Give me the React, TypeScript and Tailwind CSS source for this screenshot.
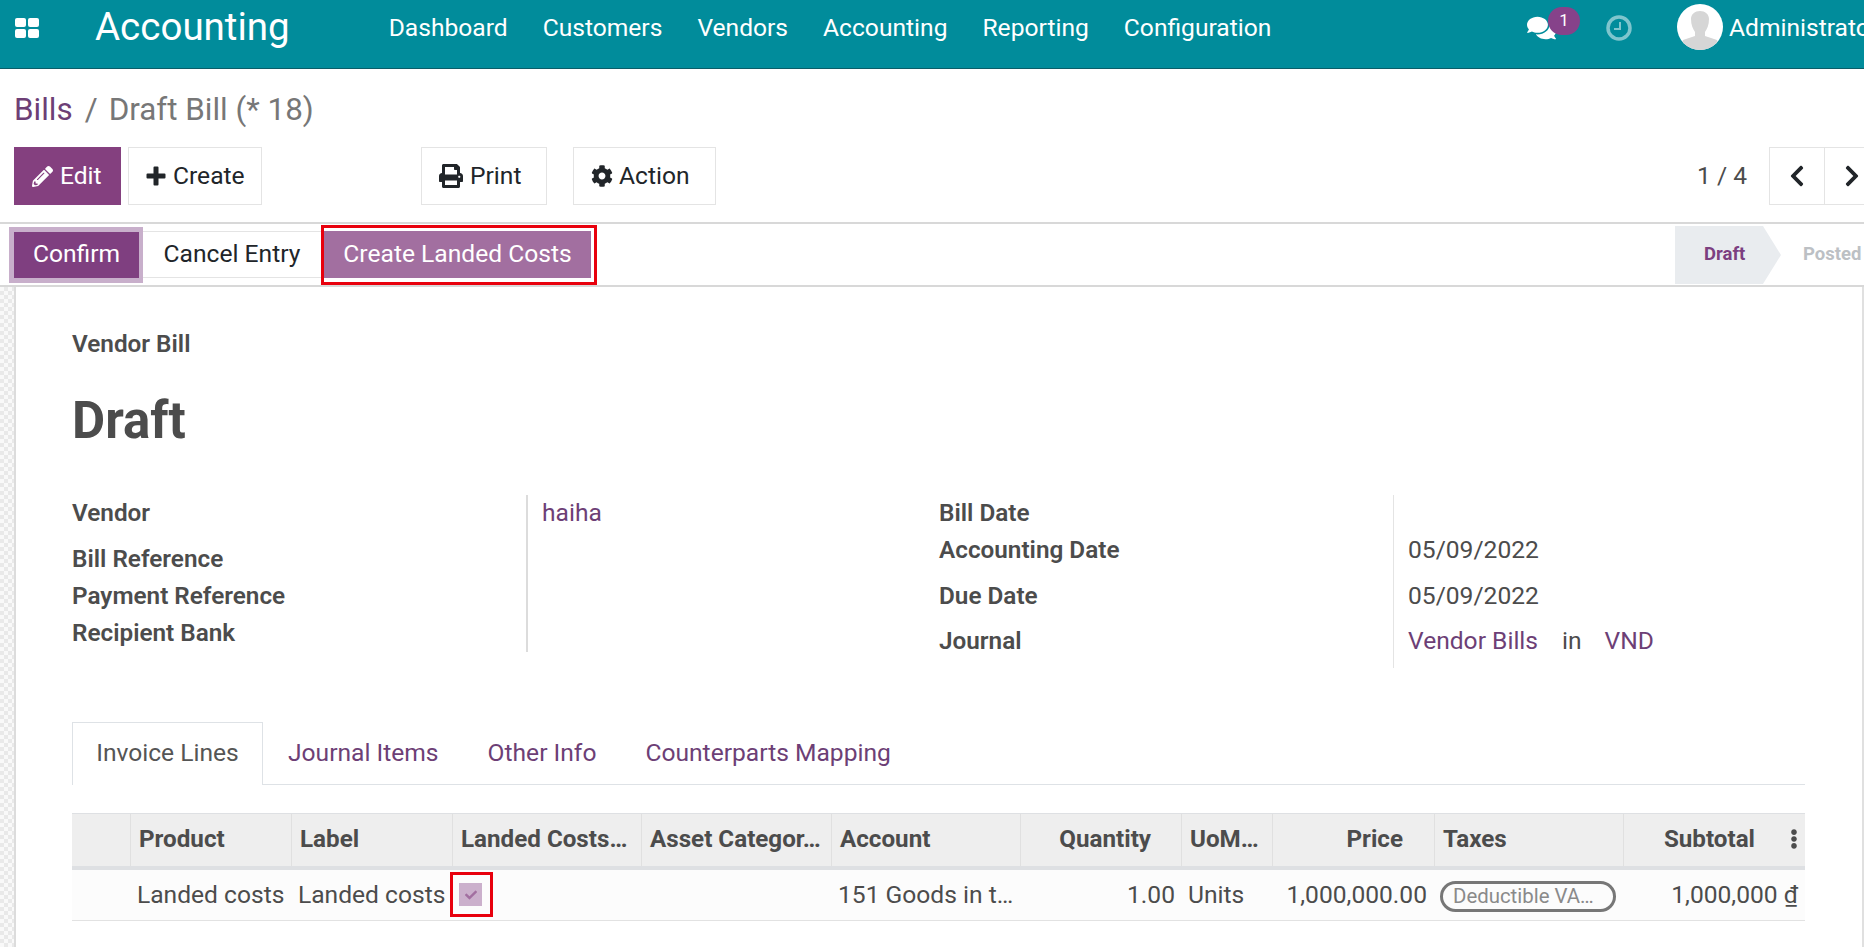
import { FaChevronLeft, FaChevronRight, FaCog, FaComments, FaEllipsisV, FaCheck, FaPencilAlt, FaPrint } from "react-icons/fa";

const navLinks = ["Dashboard", "Customers", "Vendors", "Accounting", "Reporting", "Configuration"];
const tabs = ["Journal Items", "Other Info", "Counterparts Mapping"];
const gridCols = "grid-cols-[59px_161px_161px_189px_190px_189px_161px_91px_162px_189px_181px]";
const headCell = "flex items-center border-r border-[#e0e0e0] pb-[2px] pl-[8px] text-[24.2px] font-bold text-[#4c4c4c] whitespace-nowrap";

const Grid = () => (
  <svg viewBox="0 0 24 20" className="h-[20px] w-[24px] fill-white">
    <rect x="0" y="0" width="11" height="9" rx="2" />
    <rect x="13" y="0" width="11" height="9" rx="2" />
    <rect x="0" y="11" width="11" height="9" rx="2" />
    <rect x="13" y="11" width="11" height="9" rx="2" />
  </svg>
);

const Clock = () => (
  <svg viewBox="0 0 26 26" className="h-[26px] w-[26px] fill-none stroke-[#7fc5cd]">
    <circle cx="13" cy="13" r="11" strokeWidth="3.500" />
    <path d="M14 7v7H8" strokeWidth="2" />
  </svg>
);

const Avatar = () => (
  <div className="h-[46px] w-[46px] shrink-0 overflow-hidden rounded-full bg-white">
    <svg viewBox="0 0 46 46" className="h-[46px] w-[46px] fill-[#d6d6d6]">
      <path d="M14 15c0-5 4-8 9-8s9 3 9 8c0 6-2 10-4 13v4l12 4 3 10H3l3-10 12-4v-4c-2-3-4-7-4-13z" />
    </svg>
  </div>
);

const Plus = () => (
  <svg viewBox="0 0 20 20" className="h-[20px] w-[20px] fill-[#212529]">
    <path d="M7.500 1.500a1 1 0 0 1 1-1h3a1 1 0 0 1 1 1v6h6a1 1 0 0 1 1 1v3a1 1 0 0 1-1 1h-6v6a1 1 0 0 1-1 1h-3a1 1 0 0 1-1-1v-6h-6a1 1 0 0 1-1-1v-3a1 1 0 0 1 1-1h6z" />
  </svg>
);

const App = () => {
  return (
    <div className="h-[947px] w-[1864px] overflow-hidden bg-white font-['Roboto',sans-serif] text-[24.6px] text-[#4c4c4c]">
      {/* Navbar */}
      <header className="flex h-[69px] items-center border-b border-[#0b5d68] bg-[#018c9b] pb-[12px] text-white">
        <div className="ml-[15px] mb-[1px]"><Grid /></div>
        <span className="ml-[56px] mb-[1px] text-[38.5px] leading-none">Accounting</span>
        <nav className="ml-[99px] flex gap-[35px]">
          {navLinks.map((link) => (
            <span key={link} className="leading-none">{link}</span>
          ))}
        </nav>
        <div className="ml-auto flex items-center">
          <div className="relative mr-[50px]">
            <FaComments className="h-[28px] w-[29px]" />
            <span className="absolute left-[21px] -top-[7px] flex h-[28px] w-[32px] items-center justify-center rounded-full bg-[#86428a] text-[17px]">1</span>
          </div>
          <div className="mr-[45px]"><Clock /></div>
          <div className="mb-[2px]"><Avatar /></div>
          <span className="ml-[6px] w-[135px] overflow-hidden whitespace-nowrap">Administrator</span>
        </div>
      </header>

      {/* Breadcrumb */}
      <div className="flex h-[78px] items-center pl-[14px] pt-[3px] text-[31.4px] text-[#777]">
        <span className="text-[#6d3f76]">Bills</span>
        <span className="ml-[12px] mr-[11px]">/</span>
        <span>Draft Bill (* 18)</span>
      </div>

      {/* Buttons */}
      <div className="flex h-[77px] items-start border-b-2 border-[#d8d8d8] pl-[14px]">
        <button className="flex h-[58px] w-[107px] items-center gap-[7px] bg-[#84407f] pl-[18px] text-white">
          <FaPencilAlt className="h-[21px] w-[21px]" />Edit
        </button>
        <button className="ml-[7px] flex h-[58px] w-[134px] items-center gap-[7px] border border-[#e4e4e4] pl-[17px] text-[#212529]">
          <Plus />Create
        </button>
        <button className="ml-[159px] flex h-[58px] w-[126px] items-center gap-[7px] border border-[#e4e4e4] pl-[17px] text-[#212529]">
          <FaPrint className="h-[24px] w-[24px]" />Print
        </button>
        <button className="ml-[26px] flex h-[58px] w-[143px] items-center gap-[6px] border border-[#e4e4e4] pl-[17px] text-[#212529]">
          <FaCog className="h-[22px] w-[22px]" />Action
        </button>
        <div className="ml-auto flex">
          <span className="mr-[22px] flex h-[58px] items-center">1 / 4</span>
          <button className="flex h-[58px] w-[56px] items-center justify-center border border-[#e4e4e4] text-[#212529]">
            <FaChevronLeft className="h-[24px] w-[24px]" />
          </button>
          <button className="flex h-[58px] w-[39px] items-center justify-start border-y border-[#e4e4e4] pl-[15px] text-[#212529]">
            <FaChevronRight className="h-[24px] w-[24px] shrink-0" />
          </button>
        </div>
      </div>

      {/* Statusbar */}
      <div className="flex h-[63px] items-center border-b-2 border-[#d8d8d8]">
        <button className="ml-[9px] h-[56px] w-[134px] border-[5px] border-r-[4px] border-[#c8afcb] bg-[#7f3f80] text-white">Confirm</button>
        <button className="h-[47px] w-[178px] border-y border-[#e4e4e4] text-[#212529]">Cancel Entry</button>
        <div className="flex h-[60px] w-[276px] items-center border-[3px] border-[#e8000d]">
          <button className="h-[47px] w-[267px] bg-[#a26fa0] text-white">Create Landed Costs</button>
        </div>
        <div className="ml-auto mt-[2px] flex h-[58px] items-center self-start">
          <div className="flex h-[58px] w-[106px] items-center bg-[#e9ecef] pb-[1px] pl-[29px] text-[18.5px] font-bold text-[#7c3f80] [clip-path:polygon(0_0,83%_0,100%_50%,83%_100%,0_100%)]">Draft</div>
          <span className="ml-[22px] w-[61px] overflow-hidden pb-[1px] text-[18.5px] font-bold whitespace-nowrap text-[#bcc0c4]">Posted</span>
        </div>
      </div>

      {/* Sheet */}
      <div className="flex h-[660px]">
        <div className="w-[16px] shrink-0 border-r-2 border-[#dcdcdc] bg-[repeating-conic-gradient(#e9e9e9_0_25%,#f9f9f9_0_50%)] bg-[length:8px_8px]" />
        <main className="flex-1 border-r-2 border-[#e0e0e0] pl-[56px] pr-[57px]">
          <div className="mt-[43px] text-[24.3px] font-semibold leading-[28px]">Vendor Bill</div>
          <h1 className="mt-[31px] text-[51px] font-bold leading-[64px]">Draft</h1>

          {/* Fields */}
          <div className="mt-[42px] flex text-[24.3px] font-semibold">
            <div className="h-[157px] w-[456px] border-r-2 border-[#dcdcdc] pt-[4px]">
              <div className="leading-[28px]">Vendor</div>
              <div className="mt-[18px] leading-[28px]">Bill Reference</div>
              <div className="mt-[9px] leading-[28px]">Payment Reference</div>
              <div className="mt-[9px] leading-[28px]">Recipient Bank</div>
            </div>
            <div className="w-[397px] pl-[14px] pt-[4px] text-[24.6px] font-normal leading-[28px] text-[#6d3f76]">haiha</div>
            <div className="h-[173px] w-[14px]" />
            <div className="h-[173px] w-[455px] border-r border-[#e4e4e4] pt-[4px]">
              <div className="leading-[28px]">Bill Date</div>
              <div className="mt-[9px] leading-[28px]">Accounting Date</div>
              <div className="mt-[18px] leading-[28px]">Due Date</div>
              <div className="mt-[17px] leading-[28px]">Journal</div>
            </div>
            <div className="pl-[14px] pt-[4px] text-[24.6px] font-normal">
              <div className="h-[28px]" />
              <div className="mt-[9px] leading-[28px]">05/09/2022</div>
              <div className="mt-[18px] leading-[28px]">05/09/2022</div>
              <div className="mt-[17px] flex leading-[28px]">
                <span className="text-[#6d3f76]">Vendor Bills</span>
                <span className="ml-[24px]">in</span>
                <span className="ml-[23px] text-[#6d3f76]">VND</span>
              </div>
            </div>
          </div>

          {/* Tabs */}
          <div className="mt-[54px] flex h-[63px] border-b border-[#dee2e6]">
            <div className="flex h-[63px] w-[191px] items-center justify-center border-x border-t border-[#dee2e6] bg-white pb-[1px] text-[#555]">Invoice Lines</div>
            <div className="ml-[25px] flex items-center gap-[49px]">
              {tabs.map((tab) => (
                <span key={tab} className="text-[#6d3f76]">{tab}</span>
              ))}
            </div>
          </div>

          {/* Lines table */}
          <div className={`mt-[28px] grid ${gridCols} h-[57px] border-t border-b-4 border-[#dee0e3] bg-[#eeeeee]`}>
            <div className={headCell} />
            <div className={headCell}>Product</div>
            <div className={headCell}>Label</div>
            <div className={headCell}>Landed Costs…</div>
            <div className={headCell}>Asset Categor…</div>
            <div className={headCell}>Account</div>
            <div className={`${headCell} justify-end pr-[30px]`}>Quantity</div>
            <div className={headCell}>UoM…</div>
            <div className={`${headCell} justify-end pr-[31px]`}>Price</div>
            <div className={headCell}>Taxes</div>
            <div className="relative flex items-center justify-end pb-[2px] pr-[50px] text-[24.2px] font-bold text-[#4c4c4c]">
              Subtotal
              <FaEllipsisV className="absolute right-[1px] h-[20px] w-[20px]" />
            </div>
          </div>
          <div className={`grid ${gridCols} h-[51px] items-center border-b border-[#e2e2e2] bg-[#fcfcfc]`}>
            <div />
            <div className="pl-[6px]">Landed costs</div>
            <div className="pl-[6px]">Landed costs</div>
            <div className="relative h-full">
              <div className="absolute left-[-3px] top-[2px] flex h-[45px] w-[43px] items-center justify-center border-[3px] border-[#e8000d]">
                <div className="mr-[2px] flex h-[23px] w-[23px] items-center justify-center bg-[#cbb0cc]">
                  <FaCheck className="h-[12px] w-[12px] text-[#a26fa0]" />
                </div>
              </div>
            </div>
            <div />
            <div className="pl-[6px]">151 Goods in t…</div>
            <div className="pr-[7px] text-right">1.00</div>
            <div className="pl-[6px]">Units</div>
            <div className="pr-[8px] text-right">1,000,000.00</div>
            <div className="pl-[5px] pt-[2px]">
              <div className="flex h-[31px] w-[176px] items-center rounded-full border-[3px] border-[#777] pl-[10px] text-[20.4px] text-[#8a8a8a]">Deductible VA…</div>
            </div>
            <div className="pr-[7px] text-right">1,000,000 <span className="underline">₫</span></div>
          </div>
        </main>
      </div>
    </div>
  );
};

export default App;
